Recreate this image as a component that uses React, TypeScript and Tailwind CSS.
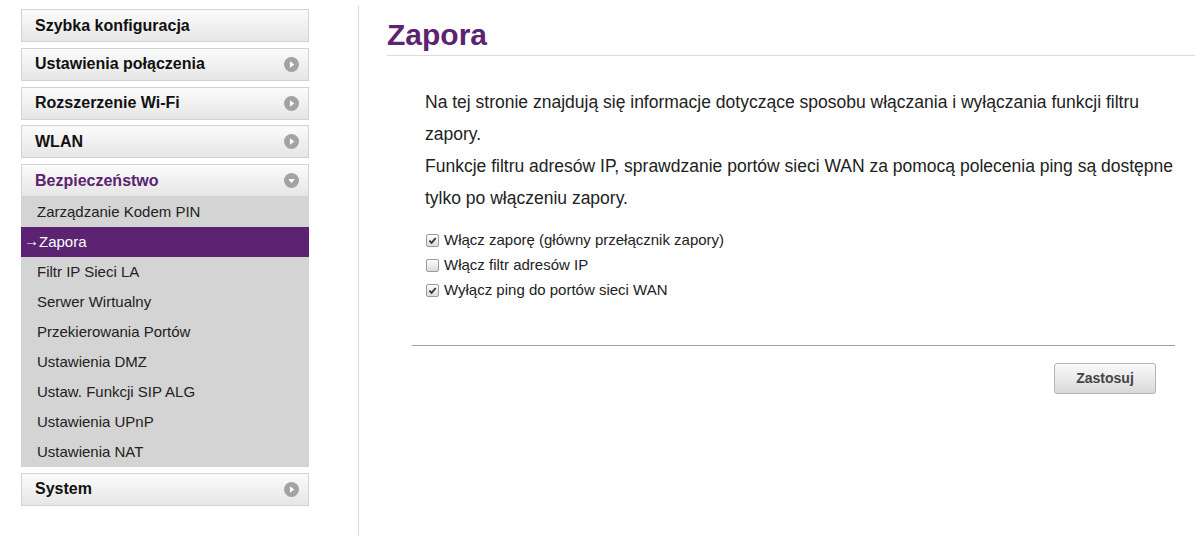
import React from "react";

const menu = [
  { label: "Szybka konfiguracja", icon: null },
  { label: "Ustawienia połączenia", icon: "right" },
  { label: "Rozszerzenie Wi-Fi", icon: "right" },
  { label: "WLAN", icon: "right" },
] as const;

const security = [
  "Zarządzanie Kodem PIN",
  "Zapora",
  "Filtr IP Sieci LA",
  "Serwer Wirtualny",
  "Przekierowania Portów",
  "Ustawienia DMZ",
  "Ustaw. Funkcji SIP ALG",
  "Ustawienia UPnP",
  "Ustawienia NAT",
];

function CircleIcon({ dir }: { dir: "right" | "down" }) {
  return (
    <svg width="15" height="15" viewBox="0 0 16 16">
      <circle cx="8" cy="8" r="8" fill="#a3a3a3" />
      {dir === "right" ? (
        <path d="M6.3 4.6 L11 8 L6.3 11.4 Z" fill="#fff" />
      ) : (
        <path d="M4.6 6.3 L11.4 6.3 L8 11 Z" fill="#fff" />
      )}
    </svg>
  );
}

function MenuHeader({
  label,
  icon,
  active,
}: {
  label: string;
  icon: "right" | "down" | null;
  active?: boolean;
}) {
  return (
    <div className="h-[33px] flex items-center justify-between pl-[13px] pr-[9px] border border-[#d2d2d2] bg-gradient-to-b from-[#fbfbfb] to-[#e6e6e6]">
      <span
        className={`text-[16px] font-bold ${active ? "text-[#5b2372]" : "text-[#111]"}`}
      >
        {label}
      </span>
      {icon && <CircleIcon dir={icon} />}
    </div>
  );
}

function Check({ checked, label }: { checked: boolean; label: string }) {
  return (
    <label className="flex items-center h-[25px] gap-[5px]">
      <span className="w-[13px] h-[13px] rounded-[2px] border border-[#9a9a9a] bg-gradient-to-b from-[#fdfdfd] to-[#dcdcdc] flex items-center justify-center">
        {checked && (
          <svg width="9" height="9" viewBox="0 0 10 10">
            <path
              d="M1.5 5.2 L4 7.6 L8.6 2.2"
              fill="none"
              stroke="#333"
              strokeWidth="2"
            />
          </svg>
        )}
      </span>
      <span className="text-[15px] text-[#222]">{label}</span>
    </label>
  );
}

export default function App() {
  return (
    <div
      className="w-[1203px] h-[536px] bg-white flex overflow-hidden"
      style={{ fontFamily: '"Liberation Sans", Arial, sans-serif' }}
    >
      {/* Sidebar */}
      <div className="w-[359px] pl-[21px] pt-[4px] pr-[49px] border-r border-[#dcdcdc] mt-[5px]">
        <div className="flex flex-col gap-[5.75px]">
          {menu.map((m) => (
            <MenuHeader key={m.label} label={m.label} icon={m.icon} />
          ))}
          <div>
            <MenuHeader label="Bezpieczeństwo" icon="down" active />
            <div className="bg-[#d4d4d4]">
              {security.map((s) => {
                const sel = s === "Zapora";
                return (
                  <div
                    key={s}
                    className={`h-[30px] flex items-center text-[15px] ${
                      sel ? "bg-[#5b2372] text-white pl-[3px]" : "text-[#222] pl-[16px]"
                    }`}
                  >
                    {sel && <span className="text-[15px] -mt-[2px]">→</span>}
                    {s}
                  </div>
                );
              })}
            </div>
          </div>
          <MenuHeader label="System" icon="right" />
        </div>
      </div>

      {/* Main */}
      <div className="flex-1 pl-[28px] pr-[8px]">
        <h1 className="text-[30px] font-bold text-[#5b2372] leading-[36px] pt-[17px] pb-[2px] border-b border-[#dcdcdc]">
          Zapora
        </h1>
        <div className="pl-[38px] pr-[16px] pt-[30px] text-[17.5px] leading-[32px] text-[#222]">
          <p>
            Na tej stronie znajdują się informacje dotyczące sposobu włączania i
            wyłączania funkcji filtru zapory.
          </p>
          <p>
            Funkcje filtru adresów IP, sprawdzanie portów sieci WAN za pomocą
            polecenia ping są dostępne tylko po włączeniu zapory.
          </p>
        </div>
        <div className="pl-[39px] pt-[14px]">
          <Check checked label="Włącz zaporę (główny przełącznik zapory)" />
          <Check checked={false} label="Włącz filtr adresów IP" />
          <Check checked label="Wyłącz ping do portów sieci WAN" />
        </div>
        <div className="ml-[25px] mr-[20px] mt-[42px] border-t border-[#a0a0a0]" />
        <div className="flex justify-end mr-[39px] mt-[17px]">
          <button className="w-[102px] h-[31px] rounded-[3px] border border-[#b5b5b5] bg-gradient-to-b from-[#fafafa] to-[#d9d9d9] text-[14px] font-bold text-[#444]">
            Zastosuj
          </button>
        </div>
      </div>
    </div>
  );
}
